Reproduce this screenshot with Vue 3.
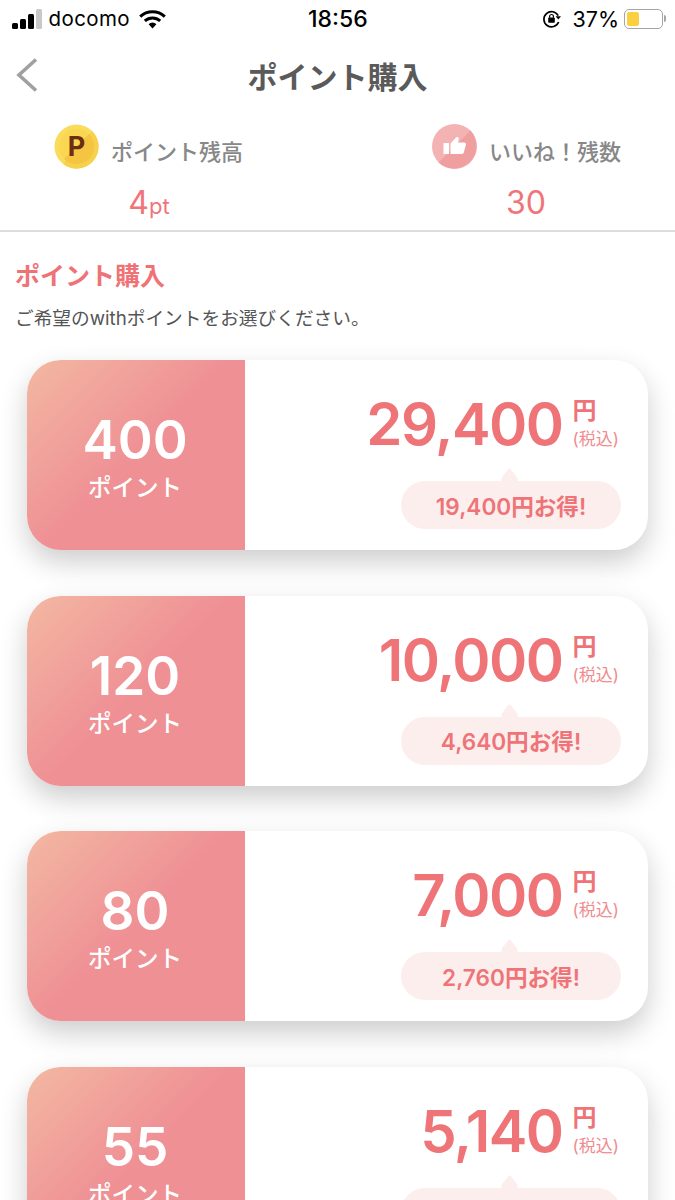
<template>
  <div class="page">
    <!-- status bar -->
    <div class="status-bar">
      <div class="status-left">
        <div class="signal">
          <i class="s1"></i><i class="s2"></i><i class="s3"></i><i class="s4"></i>
        </div>
        <span class="carrier">docomo</span>
        <svg class="wifi" width="27" height="20" viewBox="0 0 27 20">
          <path d="M13.5 19.5 9.6 15.2a5.6 5.6 0 0 1 7.8 0Z" fill="#000" />
          <path d="M1.2 7.6a18 18 0 0 1 24.6 0" fill="none" stroke="#000" stroke-width="3" />
          <path d="M5.8 11.9a11.4 11.4 0 0 1 15.4 0" fill="none" stroke="#000" stroke-width="3" />
        </svg>
      </div>
      <div class="status-time">18:56</div>
      <div class="status-right">
        <svg class="lock" width="20" height="20" viewBox="0 0 20 20">
          <path d="M16.2 6.6A7.6 7.6 0 1 0 16.6 13" fill="none" stroke="#000" stroke-width="1.7" />
          <path d="M13.6 7.2h5.4l-2.7 3.2Z" fill="#000" />
          <rect x="6.2" y="8.6" width="6.6" height="5.2" rx="0.8" fill="#000" />
          <path d="M7.6 8.8V7.4a1.9 1.9 0 0 1 3.8 0v1.4" fill="none" stroke="#000" stroke-width="1.2" />
        </svg>
        <span class="percent">37%</span>
        <div class="battery">
          <div class="battery-fill"></div>
        </div>
        <div class="battery-cap"></div>
      </div>
    </div>

    <!-- nav -->
    <div class="nav">
      <svg class="back" width="24" height="36" viewBox="0 0 24 36">
        <path d="M21 2.5 4 18l17 15.5" fill="none" stroke="#a0a0a0" stroke-width="3.6" />
      </svg>
      <h1 class="nav-title">ポイント購入</h1>
    </div>

    <!-- balances -->
    <div class="stats">
      <div class="stat stat-point">
        <div class="stat-head">
          <svg class="stat-icon" width="45" height="45" viewBox="0 0 45 45">
            <circle cx="22.5" cy="22.5" r="22" fill="#fadb5c" />
            <path d="M38 7A22 22 0 0 1 9 40Z" fill="#f7d04c" />
            <circle cx="22.5" cy="22.5" r="17.5" fill="#f9d752" />
            <path d="M35 10A17.5 17.5 0 0 1 10 35Z" fill="#f5c440" />
          </svg>
          <span class="coin-letter">P</span>
          <span class="stat-label">ポイント残高</span>
        </div>
        <div class="stat-value">4<small>pt</small></div>
      </div>
      <div class="stat stat-like">
        <div class="stat-head">
          <svg class="stat-icon" width="45" height="45" viewBox="0 0 45 45">
            <circle cx="22.5" cy="22.5" r="22.5" fill="#f4b3b3" />
            <path d="M38.4 6.6A22.5 22.5 0 0 1 6.6 38.4Z" fill="#ef9f9f" />
            <rect x="11.5" y="19" width="5.5" height="11" fill="#fff" />
            <path d="M18.5 19.5 24 13.5c.6-1 2.8-.6 2.8 1.2l-.8 3.9h6.2c1.4 0 2 1.2 1.6 2.4l-2 7.6c-.3 1-1 1.4-2 1.4H18.5Z" fill="#fff" />
          </svg>
          <span class="stat-label">いいね！残数</span>
        </div>
        <div class="stat-value">30</div>
      </div>
    </div>

    <!-- purchase list -->
    <div class="content">
      <h2 class="section-title">ポイント購入</h2>
      <p class="section-desc">ご希望のwithポイントをお選びください。</p>

      <div class="plans">
        <div v-for="plan in plans" :key="plan.points" class="plan">
          <div class="plan-left">
            <div class="plan-points">{{ plan.points }}</div>
            <div class="plan-unit">ポイント</div>
          </div>
          <div class="plan-right">
            <div class="price-row">
              <span class="price">{{ plan.price }}</span>
              <div class="price-unit">
                <span class="yen">円</span>
                <span class="tax">(税込)</span>
              </div>
            </div>
            <div class="save">{{ plan.save }}円お得!</div>
          </div>
        </div>
      </div>
    </div>
  </div>
</template>

<script setup>
const plans = [
  { points: 400, price: '29,400', save: '19,400' },
  { points: 120, price: '10,000', save: '4,640' },
  { points: 80, price: '7,000', save: '2,760' },
  { points: 55, price: '5,140', save: '1,910' }
]
</script>

<style>
html,
body {
  margin: 0;
  background: #fff;
  overflow: hidden;
}
</style>

<style scoped>
.page {
  width: 675px;
  height: 1200px;
  overflow: hidden;
  background: #fff;
  font-family: 'Inter', 'Noto Sans CJK JP', sans-serif;
}

.status-bar {
  display: flex;
  justify-content: space-between;
  align-items: center;
  height: 37px;
  padding: 0 12px;
  position: relative;
  color: #000;
}

.status-left {
  display: flex;
  align-items: center;
}

.signal {
  display: flex;
  align-items: flex-end;
  gap: 2.5px;
  height: 20px;
}

.signal i {
  display: block;
  width: 5.5px;
  border-radius: 1.5px;
  background: #000;
}

.s1 { height: 6px; }
.s2 { height: 10px; }
.s3 { height: 15px; }
.s4 { height: 20px; background: #c8c8c8 !important; }

.carrier {
  margin-left: 7px;
  font-size: 20.5px;
  letter-spacing: 0.4px;
}

.wifi {
  margin-left: 9px;
}

.status-time {
  position: absolute;
  left: 308px;
  top: 6px;
  font-size: 23px;
  font-weight: 500;
  line-height: 26px;
}

.status-right {
  display: flex;
  align-items: center;
  margin-left: -4px;
}

.percent {
  margin-left: 10px;
  font-size: 21.5px;
}

.battery {
  box-sizing: border-box;
  width: 39px;
  height: 20px;
  margin-left: 5px;
  padding: 2px;
  border: 1.5px solid #a5a5a5;
  border-radius: 5px;
}

.battery-fill {
  width: 12px;
  height: 100%;
  border-radius: 2px;
  background: #fbcf3f;
}

.battery-cap {
  width: 2px;
  height: 7px;
  margin-left: 1px;
  margin-right: -3px;
  border-radius: 0 2px 2px 0;
  background: #a5a5a5;
}

.nav {
  display: flex;
  align-items: center;
  justify-content: center;
  height: 75px;
  position: relative;
}

.back {
  position: absolute;
  left: 15px;
  top: 20px;
}

.nav-title {
  margin: 0;
  font-size: 30px;
  font-weight: 700;
  color: #5a5a5a;
}

.stats {
  display: flex;
  box-sizing: border-box;
  height: 120px;
  border-bottom: 2px solid #dcdcdc;
}

.stat {
  position: relative;
  display: flex;
  flex-direction: column;
}

.stat-point {
  padding-left: 54px;
  width: 432px;
  box-sizing: border-box;
}

.stat-head {
  display: flex;
  align-items: center;
  height: 45px;
  margin-top: 12px;
  position: relative;
}

.coin-letter {
  position: absolute;
  left: 0;
  width: 45px;
  text-align: center;
  font-size: 27px;
  font-weight: 700;
  color: #6e2c10;
  line-height: 45px;
}

.stat-label {
  margin-left: 12px;
  margin-top: 7px;
  font-size: 22px;
  font-weight: 500;
  color: #888;
  white-space: nowrap;
}

.stat-value {
  font-size: 32px;
  line-height: 40px;
  margin-top: 14px;
  text-align: center;
  color: #f07478;
}

.stat-point .stat-value {
  width: 190px;
}

.stat-like .stat-value {
  width: 188px;
}

.stat-value small {
  font-size: 22px;
}

.content {
  padding: 0 27px;
}

.section-title {
  margin: 27px 0 0 -12px;
  font-size: 25px;
  line-height: 34px;
  font-weight: 700;
  color: #ef7276;
}

.section-desc {
  margin: 13px 0 0 -12px;
  font-size: 18.7px;
  line-height: 26px;
  color: #555;
  white-space: nowrap;
}

.plans {
  display: flex;
  flex-direction: column;
  gap: 45.6px;
  margin-top: 28px;
}

.plan {
  display: flex;
  flex-shrink: 0;
  height: 190px;
  border-radius: 34px;
  background: #fff;
  box-shadow: 0 12px 28px rgba(0, 0, 0, 0.2);
}

.plan-left {
  display: flex;
  flex-direction: column;
  align-items: center;
  width: 218px;
  padding-top: 49px;
  padding-right: 2px;
  box-sizing: border-box;
  border-radius: 34px 0 0 34px;
  background: linear-gradient(135deg, #f3b8a2 0%, #ef9095 50%, #ef9095 100%);
  color: #fff;
}

.plan-points {
  font-size: 53px;
  line-height: 62px;
  font-weight: 600;
}

.plan-unit {
  font-size: 23.5px;
  font-weight: 500;
  line-height: 30px;
  margin-top: 2px;
}

.plan-right {
  flex: 1;
  display: flex;
  flex-direction: column;
  align-items: flex-end;
  padding: 0 27px 0 0;
}

.price-row {
  display: flex;
  align-items: flex-start;
  margin-top: 29px;
  padding-right: 2px;
  color: #ee7478;
}

.price {
  font-size: 58px;
  line-height: 70px;
  font-weight: 600;
  letter-spacing: -1.5px;
}

.price-unit {
  display: flex;
  flex-direction: column;
  align-items: flex-start;
  margin-left: 10px;
  margin-top: 6px;
}

.yen {
  font-size: 24px;
  line-height: 32px;
  font-weight: 700;
}

.tax {
  font-size: 17px;
  line-height: 20px;
  margin-top: 2px;
  color: #f08c8f;
  white-space: nowrap;
}

.save {
  position: relative;
  display: flex;
  align-items: center;
  justify-content: center;
  width: 220px;
  height: 48px;
  margin-top: 22px;
  border-radius: 24px;
  background: #fdeeee;
  color: #ee7478;
  font-size: 22.6px;
  font-weight: 600;
}

.save::before {
  content: '';
  position: absolute;
  left: 101px;
  top: -9px;
  width: 15px;
  height: 15px;
  border-radius: 3px;
  background: #fdeeee;
  transform: rotate(45deg) skew(8deg, 8deg);
}
</style>
